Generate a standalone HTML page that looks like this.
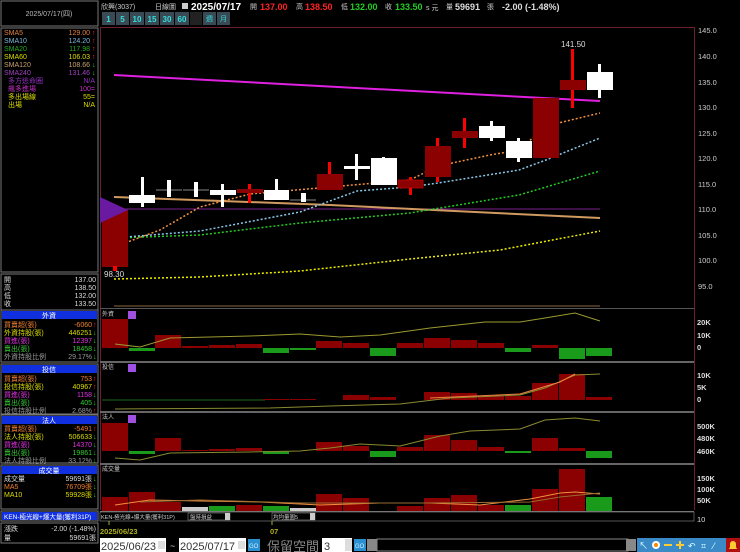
<!DOCTYPE html>
<html><head><meta charset="utf-8"><style>
html,body{margin:0;padding:0;background:#000;width:740px;height:552px;overflow:hidden}
svg{display:block}
text{font-family:"Liberation Sans","Noto Sans CJK TC","WenQuanYi Zen Hei",sans-serif}
.s{font-size:7px}
.m{font-family:"Liberation Mono","Noto Sans CJK TC",monospace;font-size:7px}
</style></head><body>
<svg width="740" height="552" viewBox="0 0 740 552" xmlns="http://www.w3.org/2000/svg">
<rect width="740" height="552" fill="#000"/>
<rect x="1" y="1" width="97" height="25" fill="none" stroke="#777" stroke-width="1"/>
<text x="49" y="16" class="s" fill="#bbb" text-anchor="middle">2025/07/17(四)</text>
<rect x="1" y="28" width="97" height="244" fill="none" stroke="#777"/>
<g class="m">
<text x="4" y="35" fill="#e08040">SMA5</text><text x="90" y="35" fill="#e08040" text-anchor="end">129.00</text><text x="92" y="35" fill="#f22">↑</text>
<text x="4" y="43" fill="#7ab8d8">SMA10</text><text x="90" y="43" fill="#7ab8d8" text-anchor="end">124.20</text><text x="92" y="43" fill="#f22">↑</text>
<text x="4" y="51" fill="#2a2">SMA20</text><text x="90" y="51" fill="#2a2" text-anchor="end">117.98</text><text x="92" y="51" fill="#f22">↑</text>
<text x="4" y="59" fill="#dd0">SMA60</text><text x="90" y="59" fill="#dd0" text-anchor="end">106.03</text><text x="92" y="59" fill="#f22">↑</text>
<text x="4" y="67" fill="#c9a070">SMA120</text><text x="90" y="67" fill="#c9a070" text-anchor="end">108.66</text><text x="92" y="67" fill="#2c2">↓</text>
<text x="4" y="75" fill="#a040c0">SMA240</text><text x="90" y="75" fill="#a040c0" text-anchor="end">131.46</text><text x="92" y="75" fill="#2c2">↓</text>
<text x="8" y="83" fill="#9030c0">多方逃命圈</text><text x="95" y="83" fill="#9030c0" text-anchor="end">N/A</text>
<text x="8" y="91" fill="#c030c0">飆多進場</text><text x="95" y="91" fill="#c030c0" text-anchor="end">100=</text>
<text x="8" y="99" fill="#dd0">多出場線</text><text x="95" y="99" fill="#dd0" text-anchor="end">55=</text>
<text x="8" y="107" fill="#dd0">出場</text><text x="95" y="107" fill="#dd0" text-anchor="end">N/A</text>
</g>
<rect x="1" y="274" width="97" height="36" fill="none" stroke="#777"/>
<g class="m" fill="#ddd">
<text x="4" y="282">開</text><text x="96" y="282" text-anchor="end">137.00</text>
<text x="4" y="290">高</text><text x="96" y="290" text-anchor="end">138.50</text>
<text x="4" y="298">低</text><text x="96" y="298" text-anchor="end">132.00</text>
<text x="4" y="306">收</text><text x="96" y="306" text-anchor="end">133.50</text>
</g>
<rect x="1" y="310" width="97" height="52" fill="none" stroke="#777"/>
<rect x="2" y="311" width="95" height="8" fill="#1030e0"/><text x="49" y="318" class="s" fill="#fff" text-anchor="middle">外資</text>
<g class="m">
<text x="4" y="327" fill="#f08030">買賣超(張)</text><text x="92" y="327" fill="#f08030" text-anchor="end">-6060</text><text x="93" y="327" fill="#f22">↑</text>
<text x="4" y="335" fill="#dd0">外資持股(張)</text><text x="92" y="335" fill="#dd0" text-anchor="end">446251</text><text x="93" y="335" fill="#2c2">↓</text>
<text x="4" y="343" fill="#e030e0">買進(張)</text><text x="92" y="343" fill="#e030e0" text-anchor="end">12397</text><text x="93" y="343" fill="#2c2">↓</text>
<text x="4" y="351" fill="#3c3">賣出(張)</text><text x="92" y="351" fill="#3c3" text-anchor="end">18458</text><text x="93" y="351" fill="#2c2">↓</text>
<text x="4" y="359" fill="#999">外資持股比例</text><text x="92" y="359" fill="#999" text-anchor="end">29.17%</text><text x="93" y="359" fill="#2c2">↓</text>
</g>
<rect x="1" y="364" width="97" height="50" fill="none" stroke="#777"/>
<rect x="2" y="365" width="95" height="8" fill="#1030e0"/><text x="49" y="372" class="s" fill="#fff" text-anchor="middle">投信</text>
<g class="m">
<text x="4" y="381" fill="#f08030">買賣超(張)</text><text x="92" y="381" fill="#f08030" text-anchor="end">753</text><text x="93" y="381" fill="#f22">↑</text>
<text x="4" y="389" fill="#dd0">投信持股(張)</text><text x="92" y="389" fill="#dd0" text-anchor="end">40967</text><text x="93" y="389" fill="#f22">↑</text>
<text x="4" y="397" fill="#e030e0">買進(張)</text><text x="92" y="397" fill="#e030e0" text-anchor="end">1158</text><text x="93" y="397" fill="#2c2">↓</text>
<text x="4" y="405" fill="#3c3">賣出(張)</text><text x="92" y="405" fill="#3c3" text-anchor="end">405</text><text x="93" y="405" fill="#2c2">↓</text>
<text x="4" y="413" fill="#999">投信持股比例</text><text x="92" y="413" fill="#999" text-anchor="end">2.68%</text><text x="93" y="413" fill="#f22">↑</text>
</g>
<rect x="1" y="415" width="97" height="48" fill="none" stroke="#777"/>
<rect x="2" y="416" width="95" height="8" fill="#1030e0"/><text x="49" y="423" class="s" fill="#fff" text-anchor="middle">法人</text>
<g class="m">
<text x="4" y="431" fill="#f08030">買賣超(張)</text><text x="92" y="431" fill="#f08030" text-anchor="end">-5491</text><text x="93" y="431" fill="#f22">↑</text>
<text x="4" y="439" fill="#dd0">法人持股(張)</text><text x="92" y="439" fill="#dd0" text-anchor="end">506633</text><text x="93" y="439" fill="#2c2">↓</text>
<text x="4" y="447" fill="#e030e0">買進(張)</text><text x="92" y="447" fill="#e030e0" text-anchor="end">14370</text><text x="93" y="447" fill="#2c2">↓</text>
<text x="4" y="455" fill="#3c3">賣出(張)</text><text x="92" y="455" fill="#3c3" text-anchor="end">19861</text><text x="93" y="455" fill="#2c2">↓</text>
<text x="4" y="463" fill="#999">法人持股比例</text><text x="92" y="463" fill="#999" text-anchor="end">33.12%</text><text x="93" y="463" fill="#2c2">↓</text>
</g>
<rect x="1" y="465" width="97" height="44" fill="none" stroke="#777"/>
<rect x="2" y="466" width="95" height="8" fill="#1030e0"/><text x="49" y="473" class="s" fill="#fff" text-anchor="middle">成交量</text>
<g class="m">
<text x="4" y="481" fill="#ddd">成交量</text><text x="92" y="481" fill="#ddd" text-anchor="end">59691張</text><text x="93" y="481" fill="#2c2">↓</text>
<text x="4" y="489" fill="#f08030">MA5</text><text x="92" y="489" fill="#f08030" text-anchor="end">76709張</text><text x="93" y="489" fill="#2c2">↓</text>
<text x="4" y="497" fill="#dd0">MA10</text><text x="92" y="497" fill="#dd0" text-anchor="end">59928張</text><text x="93" y="497" fill="#2c2">↓</text>
</g>
<rect x="1" y="511" width="97" height="10" fill="#000" stroke="#777"/>
<rect x="2" y="512" width="95" height="8" fill="#1030e0"/>
<text x="4" y="519" class="s" fill="#fff" style="font-size:6.5px">KEN-極光線+爆大量(獲利31P)</text>
<rect x="1" y="523" width="97" height="20" fill="none" stroke="#777"/>
<g class="m" fill="#ddd"><text x="4" y="531">漲跌</text><text x="96" y="531" text-anchor="end">-2.00 (-1.48%)</text>
<text x="4" y="540">量</text><text x="96" y="540" text-anchor="end">59691張</text></g>

<text x="101" y="9" class="s" fill="#ccc">欣興(3037)</text>
<text x="155" y="9" class="s" fill="#ccc">日線圖</text>
<rect x="182" y="3" width="6" height="6" fill="#ccc"/>
<text x="191" y="10" font-size="10" font-weight="bold" fill="#fff">2025/07/17</text>
<text x="250" y="9" class="s" fill="#ccc">開</text><text x="260" y="10" font-size="9" font-weight="bold" fill="#f22">137.00</text>
<text x="296" y="9" class="s" fill="#ccc">高</text><text x="305" y="10" font-size="9" font-weight="bold" fill="#f22">138.50</text>
<text x="341" y="9" class="s" fill="#ccc">低</text><text x="350" y="10" font-size="9" font-weight="bold" fill="#2c2">132.00</text>
<text x="385" y="9" class="s" fill="#ccc">收</text><text x="395" y="10" font-size="9" font-weight="bold" fill="#2c2">133.50</text>
<text x="426" y="10" class="s" fill="#ccc">s 元</text>
<text x="446" y="9" class="s" fill="#ccc">量</text><text x="455" y="10" font-size="9" font-weight="bold" fill="#ddd">59691</text>
<text x="487" y="9" class="s" fill="#ccc">張</text>
<text x="502" y="10" font-size="9" font-weight="bold" fill="#ddd">-2.00 (-1.48%)</text>
<g font-size="8" fill="#3dd" font-weight="bold">
<rect x="102" y="12" width="13" height="13" fill="#3a4a55"/><text x="108.5" y="22" text-anchor="middle">1</text>
<rect x="116" y="12" width="13" height="13" fill="#3a4a55"/><text x="122.5" y="22" text-anchor="middle">5</text>
<rect x="130" y="12" width="14" height="13" fill="#3a4a55"/><text x="137" y="22" text-anchor="middle">10</text>
<rect x="145" y="12" width="14" height="13" fill="#3a4a55"/><text x="152" y="22" text-anchor="middle">15</text>
<rect x="160" y="12" width="14" height="13" fill="#3a4a55"/><text x="167" y="22" text-anchor="middle">30</text>
<rect x="175" y="12" width="14" height="13" fill="#3a4a55"/><text x="182" y="22" text-anchor="middle">60</text>
<rect x="190" y="12" width="12" height="13" fill="#222"/>
<rect x="203" y="12" width="13" height="13" fill="#3a4a55"/><text x="209.5" y="21" text-anchor="middle" font-size="7" font-weight="normal">週</text>
<rect x="217" y="12" width="13" height="13" fill="#3a4a55"/><text x="223.5" y="21" text-anchor="middle" font-size="7" font-weight="normal">月</text>
</g>

<line x1="100" y1="27.5" x2="694" y2="27.5" stroke="#6a2030"/>
<line x1="100.5" y1="27" x2="100.5" y2="510" stroke="#6a2030"/>
<line x1="694.5" y1="27" x2="694.5" y2="510" stroke="#6a2030"/>
<line x1="100" y1="308.5" x2="694" y2="308.5" stroke="#555"/>
<line x1="114" y1="306" x2="600" y2="306" stroke="#8a6a40" stroke-width="1"/>
<g font-size="7.5" fill="#ccc">
<text x="698" y="33">145.0</text><text x="698" y="59">140.0</text><text x="698" y="85">135.0</text>
<text x="698" y="110">130.0</text><text x="698" y="136">125.0</text><text x="698" y="161">120.0</text>
<text x="698" y="187">115.0</text><text x="698" y="212">110.0</text><text x="698" y="238">105.0</text>
<text x="698" y="263">100.0</text><text x="698" y="289">95.0</text>
</g>
<line x1="114" y1="209" x2="600" y2="209" stroke="#7a2090" stroke-width="1"/>
<polyline points="114,75 600,101" fill="none" stroke="#e020e0" stroke-width="2"/>
<polyline points="114,197 330,205 600,218" fill="none" stroke="#d09a60" stroke-width="2"/>
<polyline points="114,279 200,277 300,271 410,259 500,250 600,231" fill="none" stroke="#ee0" stroke-width="1.5" stroke-dasharray="2,2"/>
<polyline points="114,238 200,235 300,223 410,213 440,208 519,195 600,171" fill="none" stroke="#2c2" stroke-width="1.5" stroke-dasharray="2,2"/>
<polyline points="114,238 200,231 300,212 357,191 410,187 438,183 519,170 546,160 600,138" fill="none" stroke="#8ac8e8" stroke-width="1.5" stroke-dasharray="2,2"/>
<polyline points="114,247 160,230 200,207 250,194 330,187 410,180 438,166 490,155 519,150 546,126 600,113" fill="none" stroke="#f09040" stroke-width="1.5" stroke-dasharray="2,2"/>
<g>
<rect x="102" y="210" width="26" height="57" fill="#8b0000"/>
<polygon points="100,197 128,210 100,223" fill="#6a1aa0"/>
<rect x="113" y="266" width="4" height="5" fill="#f00"/>
<text x="104" y="277" font-size="8" fill="#ddd">98.30</text>
<rect x="141" y="177" width="3" height="30" fill="#fff"/><rect x="129" y="195" width="26" height="8" fill="#fff"/>
<line x1="156" y1="190" x2="182" y2="190" stroke="#888"/><rect x="167" y="180" width="4" height="17" fill="#fff"/>
<line x1="183" y1="190" x2="209" y2="190" stroke="#888"/><rect x="194" y="182" width="4" height="15" fill="#fff"/>
<rect x="221" y="184" width="3" height="23" fill="#fff"/><rect x="210" y="190" width="26" height="5" fill="#fff"/>
<rect x="248" y="184" width="3" height="19" fill="#f00"/><rect x="237" y="189" width="26" height="4" fill="#8b0000"/>
<rect x="275" y="179" width="3" height="12" fill="#fff"/><rect x="264" y="190" width="25" height="10" fill="#fff"/>
<line x1="290" y1="200" x2="316" y2="200" stroke="#888"/><rect x="301" y="193" width="5" height="9" fill="#fff"/>
<rect x="328" y="162" width="3" height="14" fill="#f00"/><rect x="317" y="174" width="26" height="16" fill="#8b0000"/>
<rect x="355" y="154" width="3" height="26" fill="#fff"/><rect x="344" y="166" width="26" height="3" fill="#fff"/>
<rect x="382" y="157" width="3" height="3" fill="#fff"/><rect x="371" y="158" width="26" height="27" fill="#fff"/>
<rect x="409" y="177" width="3" height="18" fill="#f00"/><rect x="398" y="180" width="25" height="8" fill="#8b0000" stroke="#c00" stroke-width="0.7"/>
<rect x="436" y="138" width="3" height="44" fill="#f00"/><rect x="425" y="146" width="26" height="31" fill="#8b0000"/>
<rect x="463" y="118" width="3" height="30" fill="#f00"/><rect x="452" y="131" width="26" height="7" fill="#8b0000"/>
<rect x="490" y="121" width="3" height="20" fill="#fff"/><rect x="479" y="126" width="26" height="12" fill="#fff"/>
<rect x="517" y="138" width="3" height="24" fill="#fff"/><rect x="506" y="141" width="26" height="17" fill="#fff"/>
<rect x="533" y="98" width="26" height="60" fill="#8b0000"/>
<rect x="571" y="49" width="3" height="59" fill="#f00"/><rect x="560" y="80" width="26" height="10" fill="#8b0000"/>
<text x="561" y="47" font-size="8" fill="#ddd">141.50</text>
<rect x="598" y="64" width="3" height="34" fill="#fff"/><rect x="587" y="72" width="26" height="18" fill="#fff"/>
</g>

<g stroke="#666" stroke-width="2">
<line x1="100" y1="362" x2="694" y2="362"/><line x1="100" y1="412" x2="694" y2="412"/><line x1="100" y1="464" x2="694" y2="464"/>
</g>
<line x1="100" y1="511.5" x2="694" y2="511.5" stroke="#777"/>
<g class="s" fill="#ccc" style="font-size:6px">
<text x="102" y="316">外資</text><text x="102" y="369">投信</text><text x="102" y="419">法人</text><text x="102" y="471">成交量</text>
</g>
<g fill="#a050e0"><rect x="128" y="311" width="8" height="8"/><rect x="128" y="364" width="8" height="8"/><rect x="128" y="415" width="8" height="8"/></g>
<g font-size="7.5" fill="#ddd" font-weight="bold">
<text x="697" y="325">20K</text><text x="697" y="338">10K</text><text x="697" y="350">0</text>
<text x="697" y="378">10K</text><text x="697" y="390">5K</text><text x="697" y="402">0</text>
<text x="697" y="429">500K</text><text x="697" y="441">480K</text><text x="697" y="454">460K</text>
<text x="697" y="481">150K</text><text x="697" y="492">100K</text><text x="697" y="503">50K</text>
<text x="697" y="522" font-weight="normal">10</text>
</g>
<g fill="#8b0000">
<rect x="102" y="319" width="26" height="29"/><rect x="155" y="335" width="26" height="13"/><rect x="182" y="346" width="26" height="2"/>
<rect x="209" y="345" width="26" height="3"/><rect x="236" y="344" width="26" height="4"/><rect x="316" y="341" width="26" height="7"/>
<rect x="343" y="343" width="26" height="5"/><rect x="397" y="343" width="26" height="5"/><rect x="424" y="338" width="26" height="10"/>
<rect x="451" y="340" width="26" height="8"/><rect x="478" y="343" width="26" height="5"/><rect x="532" y="345" width="26" height="3"/>
</g>
<g fill="#1a9a1a">
<rect x="129" y="348" width="26" height="3"/><rect x="263" y="348" width="26" height="5"/><rect x="290" y="348" width="26" height="2"/>
<rect x="370" y="348" width="26" height="8"/><rect x="505" y="348" width="26" height="4"/><rect x="559" y="348" width="26" height="11"/><rect x="586" y="348" width="26" height="8"/>
</g>
<polyline points="115,344 140,347 170,338 250,336 300,334 340,337 380,335 430,328 485,322 520,322 545,318 575,313 600,321" fill="none" stroke="#9a9a30" stroke-width="1"/>
<line x1="102" y1="400" x2="265" y2="400" stroke="#1a6a1a"/>
<g fill="#8b0000">
<rect x="263" y="399" width="26" height="1"/><rect x="290" y="399" width="26" height="1"/><rect x="343" y="395" width="26" height="5"/>
<rect x="370" y="397" width="26" height="3"/><rect x="424" y="392" width="26" height="8"/><rect x="451" y="393" width="26" height="7"/>
<rect x="478" y="396" width="26" height="4"/><rect x="505" y="396" width="26" height="4"/><rect x="532" y="383" width="26" height="17"/>
<rect x="559" y="374" width="26" height="26"/><rect x="586" y="397" width="26" height="3"/>
</g>
<polyline points="115,409 270,408 330,406 400,404 450,398 520,395 545,388 575,375 600,374" fill="none" stroke="#8a8a30" stroke-width="1"/>
<polyline points="430,398 520,394 560,382 575,374" fill="none" stroke="#f08040" stroke-width="1"/>
<g fill="#8b0000">
<rect x="102" y="423" width="26" height="28"/><rect x="155" y="438" width="26" height="13"/><rect x="182" y="450" width="26" height="1"/>
<rect x="209" y="449" width="26" height="2"/><rect x="236" y="448" width="26" height="3"/><rect x="316" y="442" width="26" height="9"/>
<rect x="343" y="446" width="26" height="5"/><rect x="397" y="447" width="26" height="4"/><rect x="424" y="435" width="26" height="16"/>
<rect x="451" y="440" width="26" height="11"/><rect x="478" y="447" width="26" height="4"/><rect x="532" y="438" width="26" height="13"/><rect x="559" y="448" width="26" height="3"/>
</g>
<g fill="#1a9a1a">
<rect x="129" y="451" width="26" height="3"/><rect x="263" y="451" width="26" height="3"/><rect x="370" y="451" width="26" height="6"/>
<rect x="505" y="451" width="26" height="2"/><rect x="586" y="451" width="26" height="7"/>
</g>
<polyline points="115,458 140,460 170,453 250,452 300,451 330,448 360,444 400,446 440,436 470,431 520,429 545,420 575,418 600,421" fill="none" stroke="#8a8a30" stroke-width="1"/>
<g fill="#8b0000">
<rect x="102" y="497" width="26" height="14"/><rect x="129" y="492" width="26" height="19"/><rect x="155" y="502" width="26" height="9"/>
<rect x="236" y="505" width="26" height="6"/><rect x="316" y="494" width="26" height="17"/><rect x="343" y="498" width="26" height="13"/>
<rect x="424" y="498" width="26" height="13"/><rect x="451" y="495" width="26" height="16"/><rect x="478" y="505" width="26" height="6"/>
<rect x="532" y="489" width="26" height="22"/><rect x="559" y="469" width="26" height="42"/><rect x="397" y="506" width="26" height="5"/>
</g>
<g fill="#1a9a1a"><rect x="209" y="506" width="26" height="5"/><rect x="263" y="506" width="26" height="5"/><rect x="505" y="505" width="26" height="6"/><rect x="586" y="497" width="26" height="14"/></g>
<g fill="#ccc"><rect x="182" y="507" width="26" height="4"/><rect x="290" y="508" width="26" height="3"/></g>
<polyline points="115,505 150,500 200,501 260,502 320,505 380,503 430,503 480,505 530,499 560,493 575,492 600,494" fill="none" stroke="#f09040" stroke-width="1"/>
<polyline points="140,502 200,500 300,503 420,503 530,502 560,497 600,493" fill="none" stroke="#9a6a30" stroke-width="1"/>
<rect x="100" y="512" width="594" height="9" fill="#000" stroke="#777" stroke-width="0.7"/>
<text x="101" y="519" fill="#ccc" style="font-size:5.5px">KEN-極光線+爆大量(獲利31P)</text>
<rect x="188" y="513" width="42" height="7" fill="#000" stroke="#888" stroke-width="0.6"/><text x="190" y="519" fill="#ccc" style="font-size:5.5px">盤時損益</text>
<rect x="225" y="513" width="5" height="7" fill="#ccc"/>
<rect x="272" y="513" width="43" height="7" fill="#000" stroke="#888" stroke-width="0.6"/><text x="273" y="519" fill="#ccc" style="font-size:5.5px">均均量圖5</text>
<rect x="310" y="513" width="5" height="7" fill="#ccc"/>
<line x1="109" y1="521" x2="109" y2="525" stroke="#aa4"/><line x1="272" y1="521" x2="272" y2="525" stroke="#aa4"/>
<text x="100" y="534" font-size="7.5" font-weight="bold" fill="#b0b020">2025/06/23</text>
<text x="270" y="534" font-size="7.5" font-weight="bold" fill="#b0b020">07</text>
<rect x="100" y="538" width="66" height="14" fill="#fff"/><text x="101" y="550" font-size="11" fill="#333">2025/06/23</text>
<rect x="158" y="541" width="7" height="8" fill="#ddd"/>
<text x="170" y="549" font-size="9" fill="#ccc">~</text>
<rect x="179" y="538" width="67" height="14" fill="#fff"/><text x="180" y="550" font-size="11" fill="#333">2025/07/17</text>
<rect x="238" y="541" width="7" height="8" fill="#ddd"/>
<rect x="248" y="539" width="12" height="12" fill="#2a90d0"/><text x="249" y="548" font-size="6" fill="#cef">GO</text>
<text x="267" y="551" font-size="13" fill="#888">保留空間</text>
<rect x="322" y="538" width="30" height="14" fill="#fff"/><text x="324" y="550" font-size="11" fill="#333">3</text>
<rect x="345" y="539" width="7" height="12" fill="#ddd"/>
<rect x="354" y="539" width="12" height="12" fill="#2a90d0"/><text x="355" y="548" font-size="6" fill="#cef">GO</text>
<rect x="367" y="539" width="10" height="12" fill="#888"/>
<rect x="377" y="539" width="251" height="12" fill="#000" stroke="#888"/>
<rect x="626" y="539" width="10" height="12" fill="#888"/>
<rect x="637" y="538" width="103" height="14" fill="#3a8ac8"/>
<g fill="#dff" font-size="9">
<text x="639" y="549">↖</text><circle cx="656" cy="545" r="4" fill="#fff"/><circle cx="656" cy="545" r="2" fill="#f80"/>
<rect x="664" y="544" width="8" height="2" fill="#fc3"/>
<rect x="676" y="544" width="8" height="2" fill="#fc3"/><rect x="679" y="541" width="2" height="8" fill="#fc3"/>
<text x="688" y="549">↶</text><text x="701" y="549">⌗</text><text x="713" y="549">⁄</text>
</g>
<rect x="726" y="538" width="14" height="14" fill="#b01010"/><path d="M729,549 h8 l-1,-2 v-3 a3,3 0 0 0 -6,0 v3 z" fill="#fc3"/>
</svg>
</body></html>
